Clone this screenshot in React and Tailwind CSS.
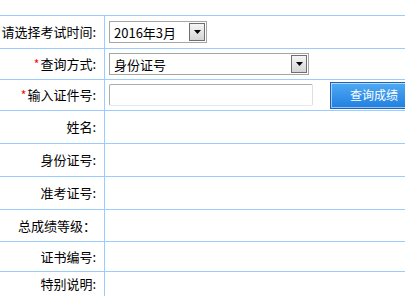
import React from "react";

const Arrow = () => (
  <svg width="7" height="4" viewBox="0 0 7 4">
    <path d="M0 0h7L3.5 4z" fill="#000" />
  </svg>
);

const SelectBox = ({ value, width }) => (
  <div
    className={`flex items-center h-[22px] border border-[#a5a5a5] bg-white ${width}`}
  >
    <span className="flex-1 pl-[4px] text-[13px] leading-none text-black">{value}</span>
    <div className="flex items-center justify-center w-[16px] h-[18px] mr-[1px] border border-[#6f6f6f] bg-gradient-to-b from-[#f6f6f6] to-[#d4d4d4]">
      <Arrow />
    </div>
  </div>
);

const Label = ({ text, required }) => (
  <span className="text-[13px] text-black whitespace-nowrap">
    {required && <span className="text-[#ff0000] text-[12px] mr-[1px]">*</span>}
    {text}
  </span>
);

const rows = [
  { label: "请选择考试时间:", h: "h-[33px]", field: "time" },
  { label: "查询方式:", h: "h-[31px]", field: "mode", required: true },
  { label: "输入证件号:", h: "h-[31px]", field: "id", required: true },
  { label: "姓名:", h: "h-[33px]" },
  { label: "身份证号:", h: "h-[33px]" },
  { label: "准考证号:", h: "h-[33px]" },
  { label: "总成绩等级：", h: "h-[32px]" },
  { label: "证书编号:", h: "h-[30px]" },
  { label: "特别说明:", h: "h-[25px]" },
];

const Field = ({ field }) => {
  if (field === "time") return <SelectBox value="2016年3月" width="w-[98px]" />;
  if (field === "mode") return <SelectBox value="身份证号" width="w-[200px]" />;
  if (field === "id")
    return (
      <div className="flex items-center">
        <div className="w-[204px] h-[22px] rounded-[2px] border border-[#abadb3] border-r-[#dbdfe6] border-b-[#e3e9ef] bg-white" />
        <button className="ml-[17px] w-[88px] h-[27px] border border-[#1b63b8] bg-gradient-to-b from-[#4fa9f3] to-[#1f7fe0] text-white text-[12px] leading-none shadow-[inset_0_0_0_1px_rgba(255,255,255,0.55)]">
          查询成绩
        </button>
      </div>
    );
  return null;
};

export default function App() {
  return (
    <div
      className="w-[405px] h-[296px] overflow-hidden bg-white pt-[15px]"
      style={{ fontFamily: '"Noto Sans CJK SC", "Noto Sans", sans-serif' }}
    >
      {rows.map((r, i) => (
        <div key={i} className={`flex border-t border-[#99ccff] w-[420px] ${r.h}`}>
          <div className="w-[104px] shrink-0 flex items-center justify-end pr-[8px]">
            <Label text={r.label} required={r.required} />
          </div>
          <div className="flex-1 flex items-center pl-[4px] border-l border-[#99ccff]">
            <Field field={r.field} />
          </div>
        </div>
      ))}
    </div>
  );
}
